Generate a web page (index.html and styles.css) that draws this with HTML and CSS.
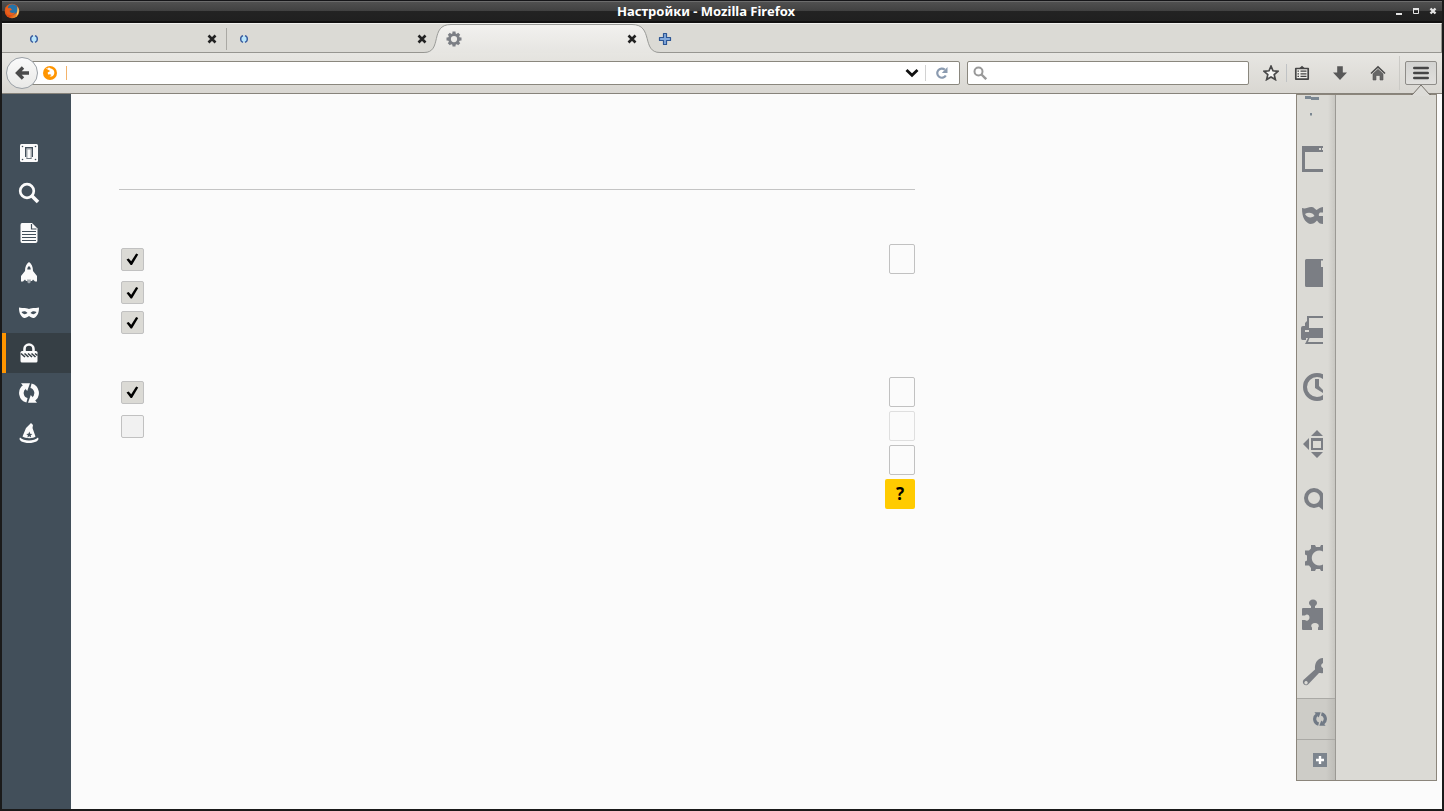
FILE: index.html
```html
<!DOCTYPE html>
<html lang="ru">
<head>
<meta charset="utf-8">
<title>Настройки - Mozilla Firefox</title>
<link rel="stylesheet" href="styles.css">
</head>
<body>
<svg class="defs" aria-hidden="true">
  <defs>
    <linearGradient id="tab-fill" x1="0" y1="0" x2="0" y2="1"><stop offset="0" stop-color="#f2f1ef"/><stop offset="1" stop-color="#e6e5e1"/></linearGradient>
    <linearGradient id="fox-fill" x1="0" y1="0" x2="1" y2="1"><stop offset="0" stop-color="#e8651a"/><stop offset=".6" stop-color="#dd4a14"/><stop offset="1" stop-color="#f9c33a"/></linearGradient>
    <symbol id="i-close" viewBox="0 0 10 10"><path d="M1.500 1.500l7 7M8.500 1.500l-7 7" stroke="#222" stroke-width="2.600"/></symbol>
    <symbol id="i-dot" viewBox="0 0 10 10"><ellipse cx="5" cy="5" rx="3.600" ry="3.300" fill="#b9e6fb"/><path d="M4 1.700A3.500 3.500 0 0 0 4 8.300M6 1.700A3.500 3.500 0 0 1 6 8.300" fill="none" stroke="#3a5a9c" stroke-width="1.400"/></symbol>
    <symbol id="i-sync" viewBox="0 0 20 20"><path d="M8 17.300A7.500 7.500 0 0 1 5.600 3.900M12 2.700A7.500 7.500 0 0 1 14.400 16.100" fill="none" stroke="currentColor" stroke-width="4.600"/><path d="M2 .2h9L8.200 8zM18 19.800H9L11.800 12z" fill="currentColor"/></symbol>
    <symbol id="i-gear" viewBox="0 0 32 32"><circle cx="16" cy="16" r="9" fill="none" stroke="currentColor" stroke-width="5.500"/><path d="M13 1h6l.5 6h-7zM13 31h6l.5-6h-7zM1 13v6l6 .5v-7zM31 13v6l-6 .5v-7zM3.500 7.700l4.200-4.200 4.300 3.500-5 5zM28.500 7.700l-4.200-4.200L20 7l5 5zM3.500 24.300l4.200 4.200L12 25l-5-5zM28.500 24.300l-4.200 4.200L20 25l5-5z" fill="currentColor"/></symbol>
  </defs>
</svg>
<div class="window">
  <header class="titlebar">
    <svg class="app-icon" viewBox="0 0 16 16"><circle cx="8" cy="8" r="7.300" fill="url(#fox-fill)"/><path d="M4 3.500C6 .8 11 .3 13.300 4c1.200 3-.3 7-4.300 7.500C6 11.500 4 8 4 3.500z" fill="#2673a8"/><path d="M1.500 4l2.200 1.200L6.500 5 8 7l-2.500.8C6 10 8.500 10.500 11 9.500 9.500 13 4.500 13 2.500 10z" fill="#e9601c"/><path d="M13.500 3.500c1.800 3 1.700 7-1.200 9.500 1-3 1.400-6 1.200-9.500z" fill="#fbe48a"/></svg>
    <h1 class="title">Настройки - Mozilla Firefox</h1>
    <div class="window-controls">
      <button aria-label="Свернуть"><svg viewBox="0 0 8 8"><path d="M1 7h6" stroke="#e4e4e4" stroke-width="2"/></svg></button>
      <button aria-label="Развернуть"><svg viewBox="0 0 8 8"><path d="M1.500 2v4.500h5V2" fill="none" stroke="#e4e4e4"/><path d="M1 2h6" stroke="#e4e4e4" stroke-width="2"/></svg></button>
      <button aria-label="Закрыть"><svg viewBox="0 0 8 8"><path d="M1.500 1.500l5 5m0-5l-5 5" stroke="#e4e4e4" stroke-width="2.400"/></svg></button>
    </div>
  </header>

  <div class="tabstrip">
    <div class="tab divided"><svg class="favicon"><use href="#i-dot"/></svg><button class="close" aria-label="Закрыть вкладку"><svg><use href="#i-close"/></svg></button></div>
    <div class="tab"><svg class="favicon"><use href="#i-dot"/></svg><button class="close" aria-label="Закрыть вкладку"><svg><use href="#i-close"/></svg></button></div>
    <div class="tab active">
      <svg class="tab-shape" viewBox="0 0 236 30" preserveAspectRatio="none"><path d="M0 30V29.500C19 29.500 5 1.500 27 1.500H208C230 1.500 217 29.500 236 29.500V30z" fill="url(#tab-fill)"/><path d="M0 29.500C19 29.500 5 1.500 27 1.500H208C230 1.500 217 29.500 236 29.500" fill="none" stroke="#9a9b98"/></svg>
      <svg class="favicon gear"><use href="#i-gear"/></svg><button class="close" aria-label="Закрыть вкладку"><svg><use href="#i-close"/></svg></button>
    </div>
    <button class="new-tab" aria-label="Новая вкладка"><svg viewBox="0 0 14 14"><path d="M5.500 1.500h3v4h4v3h-4v4h-3v-4h-4v-3h4z" fill="#84aadc" stroke="#2d5694" stroke-width="1.200" stroke-linejoin="round"/></svg></button>
  </div>

  <nav class="toolbar">
    <button class="back" aria-label="Назад"><svg viewBox="0 0 16 16"><path d="M9 2.500L3.500 8 9 13.500M4 8h11" fill="none" stroke="#4a4a4a" stroke-width="3.400"/></svg></button>
    <div class="urlbar">
      <svg class="site-icon" viewBox="0 0 14 14"><circle cx="7" cy="7" r="7" fill="#ff9500"/><path d="M2.500 2.200l2.200.4L6 1.300c.6 1 1.600 1.200 3 1.700 2 .8 2.700 2.700 2.200 4.700-.5 2.200-2.500 3.300-4.700 2.800L8.500 9 7 8.200 5 8.500 4.700 6.500 7.200 5z" fill="#fff"/></svg>
      <i class="identity-divider"></i>
      <input class="url" type="text" aria-label="Адрес">
      <button class="history" aria-label="Журнал адресов"><svg viewBox="0 0 14 10"><path d="M1.500 2L7 7.300 12.500 2" fill="none" stroke="#111" stroke-width="2.800"/></svg></button>
      <button class="reload" aria-label="Обновить"><svg viewBox="0 0 14 14"><path d="M9.800 3.600A4.600 4.600 0 1 0 10.800 9.500" fill="none" stroke="#8b9bb0" stroke-width="2.200"/><path d="M12.500 1v6H6.800z" fill="#8b9bb0"/></svg></button>
    </div>
    <div class="searchbar">
      <svg viewBox="0 0 14 14"><circle cx="5.500" cy="5.500" r="4" fill="none" stroke="#999" stroke-width="2"/><path d="M8.500 8.500l4.700 4.700" stroke="#999" stroke-width="2.400"/></svg>
      <input type="search" aria-label="Поиск">
    </div>
    <div class="actions">
      <button class="star" aria-label="Добавить в закладки"><svg viewBox="0 0 16 16"><path d="M8 1.200l2 4.600 5 .5-3.800 3.300 1.200 5L8 12l-4.400 2.600 1.200-5L1 6.300l5-.5z" fill="#f4f4f2" stroke="#484848" stroke-width="1.700"/></svg></button>
      <button aria-label="Закладки"><svg viewBox="0 0 16 16"><path d="M5.500 3L8 .8 10.500 3z" fill="#444"/><path d="M1.800 3.500h12.400v10.600H1.800z" fill="#eeede9" stroke="#444" stroke-width="1.700" stroke-linejoin="round"/><path d="M3.500 6.200H5M3.500 8.800H5M3.500 11.400H5M6.500 6.200h6M6.500 8.800h6M6.500 11.400h6" stroke="#444" stroke-width="1.200"/></svg></button>
      <button aria-label="Загрузки"><svg viewBox="0 0 16 16"><path d="M5.200 1.200h5.600V7.500H15L8 15 1 7.500h4.200z" fill="#585858"/></svg></button>
      <button aria-label="Домой"><svg viewBox="0 0 16 16"><path d="M1 8.500l7-6.700 7 6.700" fill="none" stroke="#4c4c4c" stroke-width="1.600"/><path d="M3 8.800l5-4.500 5 4.500V15h-3v-4.500H6V15H3z" fill="#666" stroke="#555" stroke-width=".6"/></svg></button>
    </div>
    <button class="menu-button" aria-label="Меню"><svg viewBox="0 0 18 16"><path d="M2.300 3h13.400M2.300 8h13.400M2.300 13h13.400" stroke="#454545" stroke-width="2.600" stroke-linecap="round"/></svg></button>
  </nav>

  <div class="page">
    <aside class="categories">
      <button aria-label="Основные"><svg viewBox="0 0 20 20"><rect x="1" y="1" width="18" height="18" rx="1.500"/><g fill="#424f5a"><path d="M6 4h8v10h-1.500V5.500h-5V14H6z"/><path d="M7.500 14.500h5v1.500h-5z"/><circle cx="3.500" cy="3.500" r=".8"/><circle cx="16.500" cy="3.500" r=".8"/><circle cx="3.500" cy="16.500" r=".8"/><circle cx="16.500" cy="16.500" r=".8"/></g><path d="M7.500 5.500h5v10h-5z" fill="#9da3a8"/><path d="M8.500 6.500h3V15h-3z"/></svg></button>
      <button aria-label="Поиск"><svg viewBox="0 0 20 20"><circle cx="8" cy="8" r="6.800" fill="none" stroke="#fbfbfb" stroke-width="2.700"/><path d="M12.700 12.700l6.300 6.300" stroke="#fbfbfb" stroke-width="3.600"/></svg></button>
      <button aria-label="Содержимое"><svg viewBox="0 0 20 20"><path d="M3 0h10l5.500 5.500V18q0 2-2 2H3q-1.500 0-1.500-2V2Q1.500 0 3 0z"/><path d="M12.500 1v5h5M3 8.500h14M3 11.500h14M3 14.500h14M3 17.500h14" fill="none" stroke="#424f5a" stroke-width="1.200"/></svg></button>
      <button aria-label="Приложения"><svg viewBox="0 0 20 20"><path d="M10-1c2.500 1.500 4 4.500 4 9l4 5v5.500h-2l-2-2-1 1.500H7l-1-1.500-2 2H2V13l4-5c0-4.500 1.500-7.500 4-9z"/><path d="M10 3c1.200.8 1.700 2 1.700 3.500H8.300C8.300 5 8.800 3.800 10 3z" fill="#424f5a"/><path d="M8 16.500h4l-.5 3L10 20.500l-1.500-1z" fill="#a3aab0"/></svg></button>
      <button aria-label="Приватность"><svg viewBox="0 0 20 20"><path d="M0 4.500c3 1 6-.5 10 1.500 4-2 7-.5 10-1.500 0 4-.7 8.500-5 10.500-2.200.3-3.300-1-5-2-1.700 1-2.800 2.300-5 2C.7 13 0 8.500 0 4.500z"/><path d="M2.500 9c2.500-1.500 4.500-1 6 1-2 1.800-4.500 1.500-6-1zM17.500 9c-2.500-1.500-4.500-1-6 1 2 1.800 4.500 1.500 6-1z" fill="#424f5a"/></svg></button>
      <button class="selected" aria-label="Защита"><svg viewBox="0 0 20 20"><path d="M5.500 9V6a4.500 4.500 0 0 1 9 0v3" fill="none" stroke="#fbfbfb" stroke-width="2.600"/><path d="M3 8h14q1.500 0 1.500 1.500V18q0 1.500-1.500 1.500H3Q1.500 19.500 1.500 18V9.500Q1.500 8 3 8z"/><path d="M2 10.500l4 3.500M5.500 10.500l4 3.500M9 10.500l4 3.500M12.500 10.500l4 3.500M16 10.500l2.500 2" stroke="#363f45" stroke-width="1.600"/></svg></button>
      <button aria-label="Синхронизация"><svg><use href="#i-sync"/></svg></button>
      <button aria-label="Дополнительные"><svg viewBox="0 0 20 20"><path d="M12 0l2 2-.5 3 3 8.500c-2 2.300-10 2.300-13 0L7 5z"/><path d="M10.300 8.500l.9 2.200 2.200.2-1.700 1.400.5 2.200-1.900-1.200-1.900 1.200.5-2.200-1.700-1.400 2.200-.2z" fill="#424f5a"/><path d="M1 14.500c4 4 14 4 18 0 2 3-3 5.500-9 5.500S-1 17.500 1 14.500z"/></svg></button>
    </aside>

    <main class="preferences">
      <hr class="rule">
      <section class="group">
        <div class="row"><input type="checkbox" checked aria-label="Предупреждать об установке дополнений"><button class="option" aria-label="Исключения"></button></div>
        <div class="row"><input type="checkbox" checked aria-label="Блокировать атакующие сайты"></div>
        <div class="row"><input type="checkbox" checked aria-label="Блокировать поддельные сайты"></div>
      </section>
      <section class="group logins">
        <div class="row"><input type="checkbox" checked aria-label="Запоминать логины"><button class="option" aria-label="Исключения"></button></div>
        <div class="row"><input type="checkbox" aria-label="Использовать мастер-пароль"><button class="option" disabled aria-label="Сменить мастер-пароль"></button></div>
        <div class="row"><button class="option" aria-label="Сохранённые логины"></button></div>
        <div class="row"><button class="help" aria-label="Справка">?</button></div>
      </section>
    </main>

    <div class="app-menu">
      <svg class="arrow" viewBox="0 0 20 12"><path d="M0 12v-1.500L1.500 10.500 10 1l8.500 9.500H20V12z" fill="#dddcd8"/><path d="M0 10.500h1.500L10 1l8.500 9.500H20" fill="none" stroke="#77726b"/></svg>
      <div class="menu-column">
        <div class="menu-items">
          <div class="clipped"><svg viewBox="0 0 23 35"><path d="M5 1h6v3H5zM11 2h8v3h-8zM10 18h2v2.500h-2z" fill="#7b8792"/></svg></div>
          <button aria-label="Новое окно"><svg viewBox="0 0 23 32"><path fill-rule="evenodd" d="M2 3h21v6H5v17h18v3H2zM19 5v2h2V5zM22 5v2h1V5z"/></svg></button>
          <button aria-label="Приватное окно"><svg viewBox="0 0 23 32"><path fill-rule="evenodd" d="M2 8c4 1.500 6-1.500 10-1 2.500.3 3 2.500 4.500 3C18 9.500 20 7 23 7v5.500h-3c-1 1-1.500 2-1 3.500h4v8c-3 0-4.500-1-6-3.500-2 2.500-4 3.500-7 3.500C5 22 2 18 2 8zM5 14c2 3.500 6 4.500 9.500 2C13 12.500 8 12 5 14z"/></svg></button>
          <button aria-label="Сохранить"><svg viewBox="0 0 23 32"><path d="M6.500 2H23v1.500h-2V10h2v20H6.500Q5 30 5 28.500v-25Q5 2 6.500 2z"/></svg></button>
          <button aria-label="Печать"><svg viewBox="0 0 23 32"><path fill-rule="evenodd" d="M7 2h16v2H9v10h14v10H9.500L8 28h15v2H5l3-6H6v2H2.500Q1 26 1 24V14q0-2 2-2h2V9l2-2zM5 16v2h4v-2z"/></svg></button>
          <button aria-label="Журнал"><svg viewBox="0 0 23 32"><circle cx="17" cy="16" r="12" fill="none" stroke="#7b7e84" stroke-width="4"/><path d="M15 8h4v7l4 4v3l-8-5z"/></svg></button>
          <button aria-label="Во весь экран"><svg viewBox="0 0 23 32"><path fill-rule="evenodd" d="M17 2l6 6H11zM3 16l6-6v12zM17 30l6-6H11zM11 10h12v12H11zM13 13v7h8v-7z"/></svg></button>
          <button aria-label="Найти"><svg viewBox="0 0 23 32"><circle cx="14" cy="13" r="8" fill="none" stroke="#7b7e84" stroke-width="4"/><path d="M20.500 16H23v9l-5-4z"/></svg></button>
          <button aria-label="Настройки"><svg viewBox="0 0 23 32"><path d="M11 3h4l1 2h4l1-2h2v6.500a7.500 7.500 0 1 0 0 13V29h-2l-1-2h-4l-1 2h-4v-3l-2-2.500H5v-4l2-1v-5l-2-1V8.500h4l2-2z"/></svg></button>
          <button aria-label="Дополнения"><svg viewBox="0 0 23 32"><path d="M2 10q0-1 1-1h8V7a4 3.500 0 1 1 4 0v2h8v22h-5v-2.500c1.500-1 1-4.500-3-4.500s-4.500 3.500-3 4.500V31H3q-1 0-1-1v-9h3c2 2 4.500 0 4.500-2.500S7 14.500 5 16.500H2z"/></svg></button>
          <button aria-label="Разработка"><svg viewBox="0 0 23 32"><path fill-rule="evenodd" d="M23 2v5c-2 1-2.500 3-1 4.500l1 .5v5c-1.500.5-3 0-4 0L9 27.500A3.300 3.300 0 1 1 4.500 23L15 13.500C14.500 7 17 2.500 23 2zM6 25a1.700 1.700 0 1 0 .1 0z"/></svg></button>
        </div>
        <button class="footer-item" aria-label="Войти в Синхронизацию"><svg><use href="#i-sync"/></svg></button>
        <button class="footer-item" aria-label="Изменить"><svg viewBox="0 0 14 14"><path d="M0 0h14v14H0z" fill="#7d858e"/><path d="M7 3v8M3 7h8" stroke="#fff" stroke-width="2.400"/></svg></button>
      </div>
    </div>
  </div>
</div>
</body>
</html>
```
FILE: styles.css
```css
* { box-sizing: border-box; }
body { margin: 0; font-family: "Noto Sans", "Open Sans", sans-serif; }
button { padding: 0; border: 0; background: none; display: flex; align-items: center; justify-content: center; }
svg { display: block; flex: none; }
.defs { position: absolute; width: 0; height: 0; }

.window { min-height: 100vh; display: flex; flex-direction: column; padding: 0 2px 2px; background: #1a1a1a; }

.titlebar {
  height: 23px; display: flex; align-items: center; padding: 0 5px 2px 2px;
  border-top: 1px solid #151518;
  background: linear-gradient(#6c6c6c 0 1px, #505050 1px, #414141 10px, #232323 10px, #202020 20px, #111 20px);
}
.app-icon { width: 16px; height: 16px; }
.title { flex: 1; margin: 0; padding-right: 3px; text-align: center; font-size: 13px; line-height: 18px; font-weight: 700; color: #fff; }
.window-controls { display: flex; gap: 9px; }
.window-controls svg { width: 8px; height: 8px; }

.tabstrip { display: flex; height: 30px; padding-left: 14px; background: #dbdad5; border-top: 1px solid #f1f1ee; border-bottom: 1px solid #969590; border-right: 1px solid #96958f; }
.tab { position: relative; width: 210px; display: flex; align-items: center; justify-content: space-between; padding: 2px 9px 0 13px; }
.tab + .tab:not(.active) { background: linear-gradient(#aaa9a4, #aaa9a4) left 4px / 1px 22px no-repeat; }
.favicon { width: 10px; height: 10px; }
.gear { width: 16px; height: 16px; margin-left: -3px; color: #7c7f85; position: relative; }
.close { position: relative; }
.close svg { width: 10px; height: 10px; }
.tab-shape { position: absolute; left: -12px; top: -1px; width: calc(100% + 26px); height: 30px; }
.new-tab { width: 38px; padding-top: 2px; }
.new-tab svg { width: 14px; height: 14px; }

.toolbar { height: 41px; display: flex; align-items: center; padding: 0 5px 1px 4px; background: linear-gradient(#e7e6e2, #d9d7d2); border-bottom: 1px solid #87837b; }
.back { position: relative; width: 32px; height: 32px; border: 1px solid #9aa0a6; border-radius: 50%; background: linear-gradient(#fafafa, #e9e9e7); }
.back svg { width: 16px; height: 16px; }
.urlbar, .searchbar { display: flex; align-items: center; height: 24px; border: 1px solid #8a877e; border-radius: 2px; background: #fff; }
.urlbar { flex: 1; margin-left: -8px; padding-left: 12px; }
.site-icon { width: 14px; height: 14px; }
.identity-divider { width: 1px; height: 14px; margin-left: 9px; background: #f3b36b; }
.url, .searchbar input { flex: 1; min-width: 0; border: 0; outline: 0; background: none; font: 13px/18px "Noto Sans", sans-serif; }
.history { width: 26px; }
.history svg { width: 14px; height: 10px; }
.reload { width: 34px; height: 16px; padding-right: 2px; border-left: 1px solid #d2d2d2; }
.reload svg { width: 14px; height: 14px; }
.searchbar { flex: 0 1 282px; margin-left: 7px; padding-left: 5px; }
.searchbar svg { width: 14px; height: 14px; }
.actions { display: flex; gap: 8px; margin-left: 7px; padding-right: 6px; border-right: 1px solid #cbcac6; height: 34px; align-items: center; }
.actions button { width: 30px; height: 18px; }
.actions svg { width: 16px; height: 16px; }
.actions .star { width: 31px; margin-right: -8px; border-right: 1px solid #c0c3c5; }
.menu-button { width: 32px; height: 24px; margin-left: 5px; border: 1px solid #8e8c88; border-radius: 2px; background: linear-gradient(#d3d3d1, #e1e0dd); }
.menu-button svg { width: 18px; height: 16px; }

.page { position: relative; flex: 1; display: flex; background: #fbfbfb; }
.categories { width: 69px; padding-top: 39px; background: #424f5a; }
.categories button { width: 100%; height: 40px; padding-left: 17px; justify-content: flex-start; color: #fbfbfb; }
.categories svg { width: 20px; height: 20px; fill: #fbfbfb; overflow: visible; }
.categories .selected { padding-left: 13px; border-left: 4px solid #ff9500; background: #363f45; }

.preferences { flex: 0 1 844px; padding: 95px 0 0 48px; }
.rule { margin: 0 0 54px; border: 0; border-top: 1px solid #c4c4c4; }
.group { display: flex; flex-direction: column; gap: 7px; }
.logins { margin-top: 43px; gap: 4px; }
.row { display: flex; align-items: center; padding-left: 2px; }
.row input { appearance: none; width: 23px; height: 23px; margin: 0; border: 1px solid #c1c1c1; border-radius: 2px; background: #f1f1f1; }
.row input:checked { background: #dbdad5; }
.row input:checked::before { content: ""; display: block; width: 13px; height: 13px; margin: 4px; background: #000; clip-path: polygon(4% 54%, 20% 46%, 40% 68%, 78% 8%, 94% 16%, 46% 96%, 36% 96%); }
.option { width: 26px; height: 30px; margin-left: auto; border: 1px solid #c1c1c1; border-radius: 2px; background: #fbfbfb; }
.option:disabled { border-color: #dfdfdf; }
.help { width: 30px; height: 30px; margin-left: auto; border-radius: 2px; background: #ffcb00; color: #000; font: 700 17px/30px "Noto Sans", "Open Sans", sans-serif; }

.app-menu { position: absolute; top: 0; right: 5px; bottom: 28px; width: 141px; border: 1px solid #8b857b; background: #dbdad5; }
.arrow { position: absolute; right: 5px; top: -11px; width: 20px; height: 12px; }
.menu-column { width: 39px; height: 100%; display: flex; flex-direction: column; border-right: 1px solid #9b9994; background: linear-gradient(90deg, #dbdad500 31px, #c8c7c2), #dbdad5; }
.menu-items { flex: 1; min-height: 0; overflow: hidden; }
.clipped { height: 35px; padding-left: 3px; }
.clipped svg { width: 23px; height: 35px; }
.menu-items button { width: 26px; height: 57px; justify-content: flex-end; }
.menu-items button svg { width: 23px; height: 32px; fill: #7b7e84; }
.footer-item { flex: none; width: 100%; height: 41px; padding-left: 8px; border-top: 1px solid #aaa9a5; background: linear-gradient(90deg, #cdccc7 29px, #bdbcb7); color: #707985; }
.footer-item svg { width: 14px; height: 14px; }
```
